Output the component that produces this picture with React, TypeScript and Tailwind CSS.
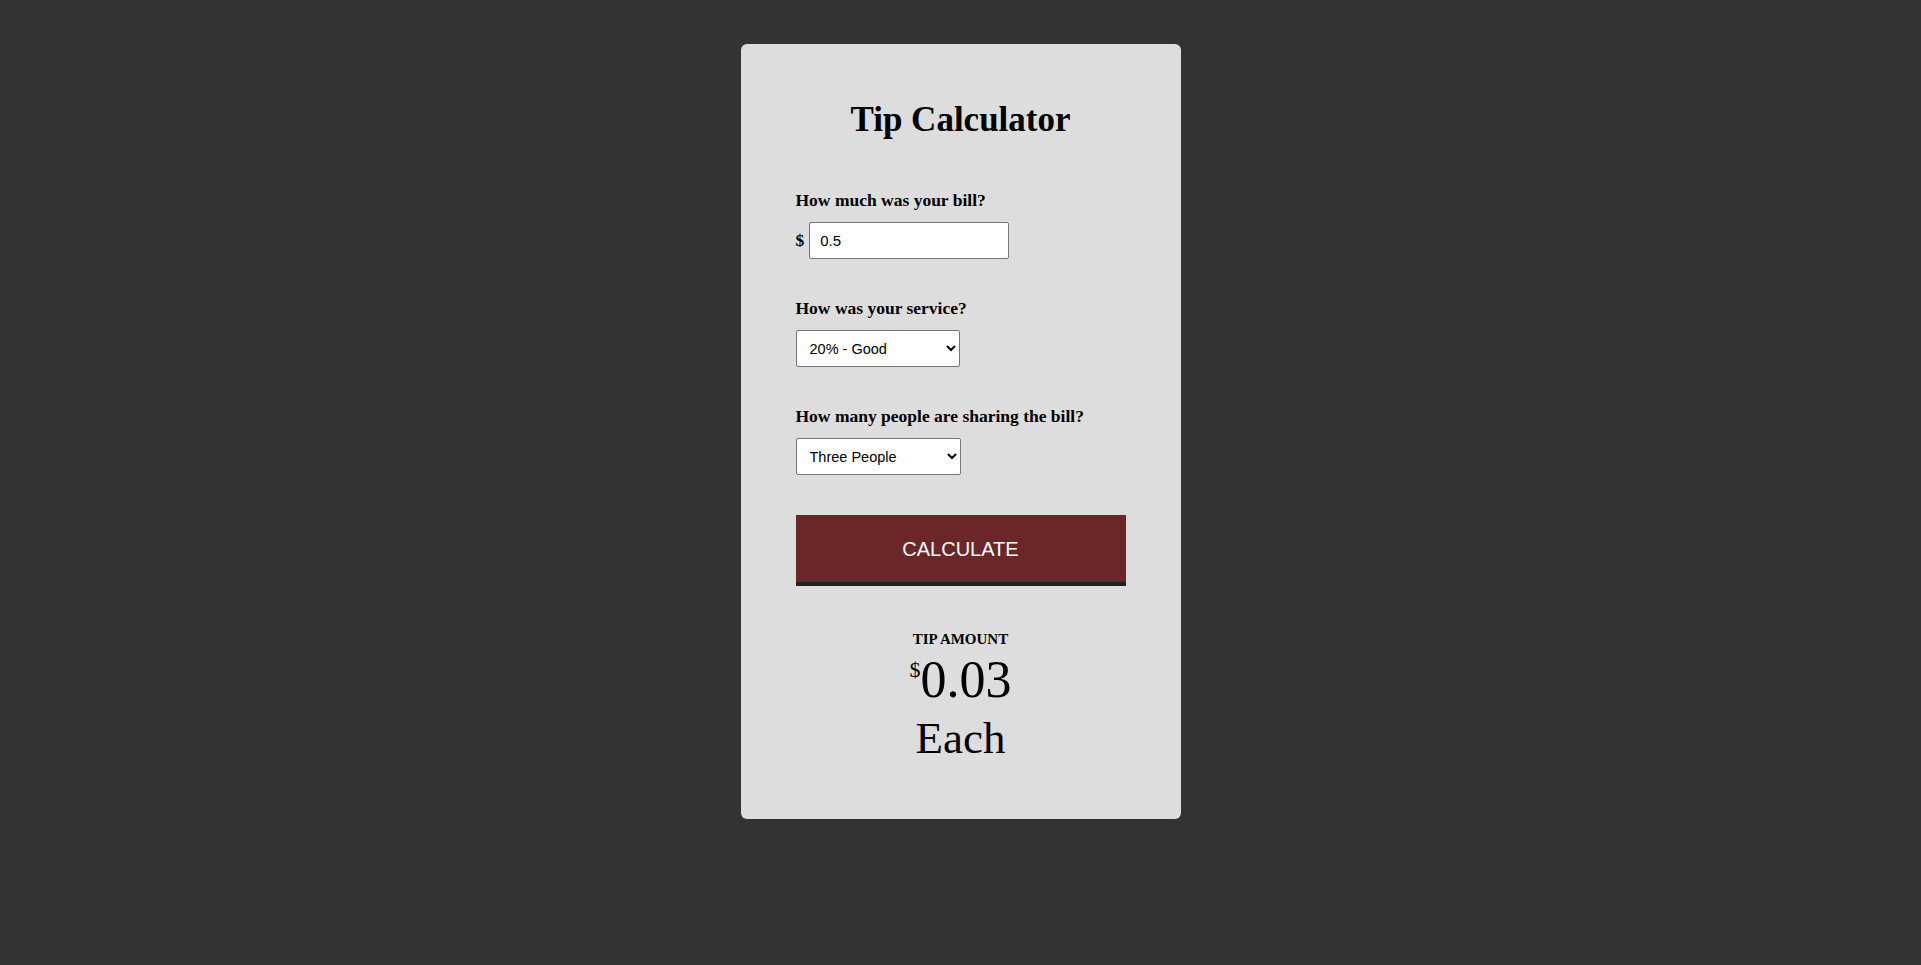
import { useState } from 'react';

const App = () => {
  const [bill, setBill] = useState('0.5');
  const [service, setService] = useState('0.2');
  const [people, setPeople] = useState('3');
  const [tip, setTip] = useState('0.03');

  const calculate = () => {
    const amount = (parseFloat(bill || '0') * parseFloat(service)) / parseInt(people, 10);
    setTip((Math.round(amount * 100) / 100).toFixed(2));
  };

  return (
    <div className="min-h-[965px] bg-[#333333] pt-[44px] font-['Liberation_Serif',serif] text-black">
      <div className="mx-auto w-[440px] rounded-[6px] bg-[#dddddd] px-[55px] pt-[56px] pb-[55px]">
        <h1 className="text-center text-[35px] leading-[40px] font-bold">Tip Calculator</h1>

        <div className="mt-[50px]">
          <p className="text-[17.5px] leading-[20px] font-bold">How much was your bill?</p>
          <div className="mt-[12px] flex items-center gap-[5px]">
            <span className="text-[17.5px] font-bold">$</span>
            <input
              className="h-[37px] w-[200px] rounded-[2px] border border-[#767676] bg-white px-[10px] font-['Liberation_Sans',sans-serif] text-[15px] outline-none"
              value={bill}
              onChange={(e) => setBill(e.target.value)}
            />
          </div>
        </div>

        <div className="mt-[39px]">
          <p className="text-[17.5px] leading-[20px] font-bold">How was your service?</p>
          <select
            className="mt-[12px] h-[37px] w-[164px] rounded-[2px] border border-[#767676] bg-white pl-[9px] pr-[4px] font-['Liberation_Sans',sans-serif] text-[14.5px]"
            value={service}
            onChange={(e) => setService(e.target.value)}
          >
            <option value="0.3">30% - Outstanding</option>
            <option value="0.2">20% - Good</option>
            <option value="0.15">15% - It was OK</option>
            <option value="0.1">10% - Bad</option>
            <option value="0.05">5% - Terrible</option>
          </select>
        </div>

        <div className="mt-[39px]">
          <p className="text-[17.5px] leading-[20px] font-bold">How many people are sharing the bill?</p>
          <select
            className="mt-[12px] h-[37px] w-[165px] rounded-[2px] border border-[#767676] bg-white pl-[9px] pr-[4px] font-['Liberation_Sans',sans-serif] text-[14.5px]"
            value={people}
            onChange={(e) => setPeople(e.target.value)}
          >
            <option value="1">Just Me</option>
            <option value="2">Two People</option>
            <option value="3">Three People</option>
            <option value="4">Four People</option>
            <option value="5">Five People</option>
          </select>
        </div>

        <button
          className="mt-[40px] h-[71px] w-full border-b-[4px] border-[#222222] bg-[#6b2727] font-['Liberation_Sans',sans-serif] text-[20px] text-white"
          onClick={calculate}
        >
          CALCULATE
        </button>

        <div className="mt-[44px] text-center">
          <p className="text-[15px] leading-[18px] font-bold">TIP AMOUNT</p>
          <p className="text-[52px] leading-[64px]">
            <span className="align-top text-[22px] leading-[44px]">$</span>
            {tip}
          </p>
          <p className="text-[45px] leading-[52px]">Each</p>
        </div>
      </div>
    </div>
  );
};

export default App;
